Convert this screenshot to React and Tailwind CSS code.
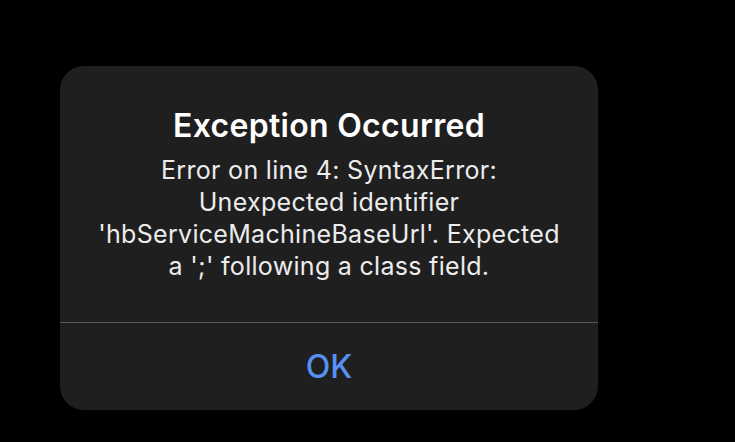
export default function App() {
  return (
    <div
      className="w-[735px] h-[442px] bg-black pt-[66px] pl-[60px] overflow-hidden"
      style={{ fontFamily: 'Inter, "Noto Sans", "Liberation Sans", sans-serif' }}
    >
      {/* Alert */}
      <div className="w-[538px] h-[344px] rounded-[24px] bg-[#1f1f1f] flex flex-col">
        <div className="flex-1 flex flex-col items-center pt-[40px] px-[20px] text-center">
          <h1 className="text-[32px] leading-[40px] font-semibold text-white tracking-[0.3px]">
            Exception Occurred
          </h1>
          <p className="mt-[8px] text-[25px] leading-[32px] text-[#ececec] tracking-[0.3px] whitespace-nowrap">
            Error on line 4: SyntaxError:
            <br />
            Unexpected identifier
            <br />
            'hbServiceMachineBaseUrl'. Expected
            <br />
            a ';' following a class field.
          </p>
        </div>
        <div className="h-px bg-[#575757]" />
        <button className="h-[87px] w-full flex items-center justify-center text-[32px] font-medium text-[#5790f2]">
          OK
        </button>
      </div>
    </div>
  )
}
